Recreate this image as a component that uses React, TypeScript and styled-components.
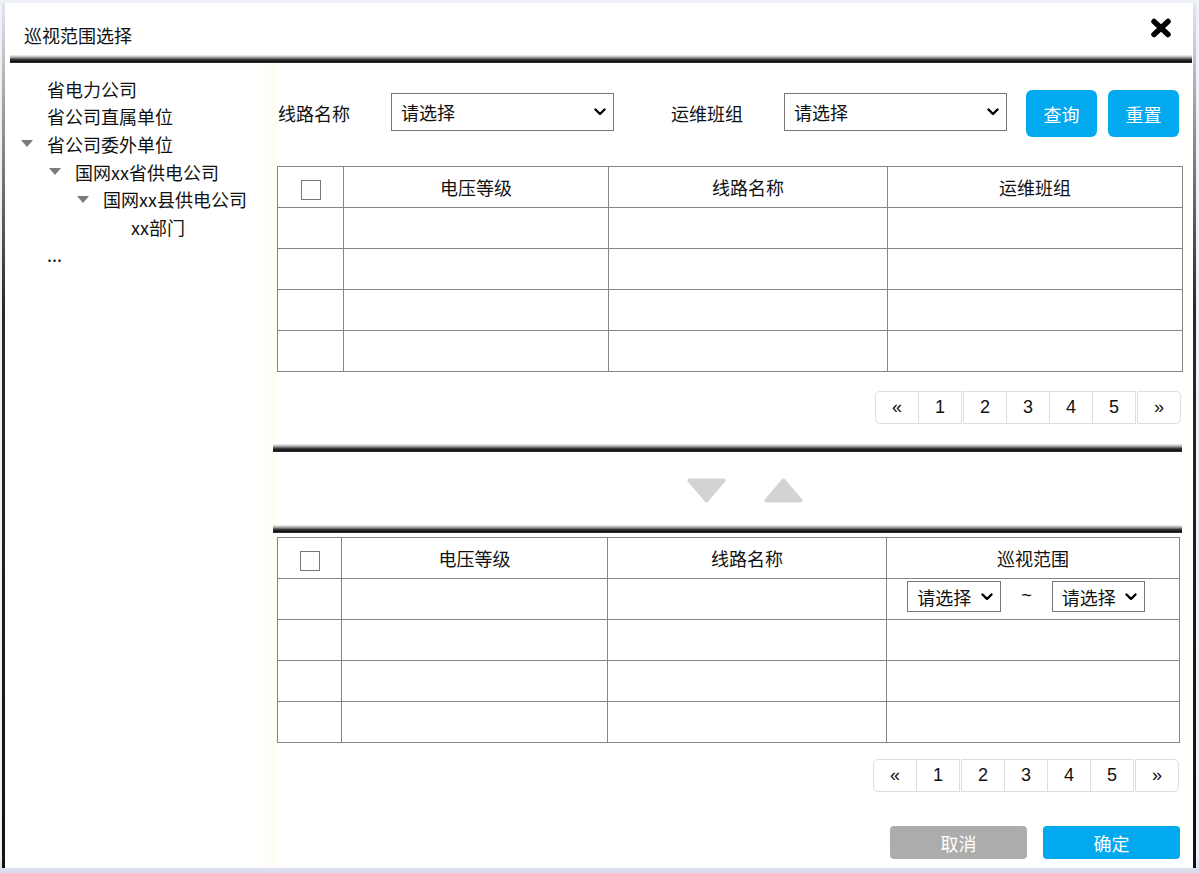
import React from "react";
import styled, { createGlobalStyle } from "styled-components";

const GlobalStyle = createGlobalStyle`
  html, body {
    margin: 0;
    padding: 0;
  }
  body {
    min-height: 100vh;
    background: linear-gradient(to bottom, #eef2f8 0%, #eef2f8 98%, #d8daee 100%);
    font-family: "Noto Sans CJK SC", "Noto Sans", sans-serif;
    color: #111;
  }
`;

const Dialog = styled.div`
  box-sizing: border-box;
  margin: 3px 0 0 2px;
  width: 1194px;
  height: 865px;
  background: #fff;
  border-style: solid;
  border-width: 0 3px;
  border-image: linear-gradient(to bottom, #e4e8ee 0%, #a0a0a0 12%, #2a2a2a 35%, #111 100%) 1;
  display: flex;
  flex-direction: column;
`;

const Header = styled.div`
  box-sizing: border-box;
  height: 52px;
  padding: 12px 21px 0 19px;
  display: flex;
  justify-content: space-between;
  align-items: center;
`;

const Title = styled.h1`
  margin: 0;
  font-size: 18px;
  font-weight: 400;
  line-height: 24px;
`;

const CloseButton = styled.button`
  align-self: flex-start;
  margin-top: 3px;
  padding: 0;
  border: none;
  background: none;
  width: 22px;
  height: 20px;
  display: flex;
`;

const Rule = styled.div<{ $left: number; $right: number; $top?: number }>`
  height: 8px;
  margin: ${(p) => p.$top ?? 0}px ${(p) => p.$right}px 0 ${(p) => p.$left}px;
  background: linear-gradient(to bottom, #f3f3f3 0%, #b8b8b8 25%, #3c3c3c 55%, #101010 80%, #3a3a3a 100%);
`;

const Body = styled.div`
  display: flex;
  flex: 1;
  min-height: 0;
`;

const Tree = styled.ul`
  list-style: none;
  margin: 0;
  padding: 12px 0 0;
  width: 272px;
  flex-shrink: 0;
  background: linear-gradient(to right, #fff 94%, #fffdf3 100%);
`;

const TreeItem = styled.li<{ $level: number }>`
  display: flex;
  align-items: center;
  height: 27.6px;
  padding-left: ${(p) => 16 + p.$level * 28}px;
  font-size: 18px;
  white-space: nowrap;
`;

const CaretSlot = styled.span`
  width: 26px;
  flex-shrink: 0;
  display: flex;
  align-items: center;
`;

const Main = styled.div`
  width: 905px;
  padding-top: 27px;
  display: flex;
  flex-direction: column;
`;

const FilterRow = styled.div`
  display: flex;
  align-items: center;
  height: 47px;
`;

const Label = styled.span<{ $offset: number }>`
  width: 113px;
  margin-left: ${(p) => p.$offset}px;
  margin-top: -2px;
  font-size: 18px;
`;

const Select = styled.div<{ $w: number; $h: number; $lift?: number }>`
  box-sizing: border-box;
  width: ${(p) => p.$w}px;
  height: ${(p) => p.$h}px;
  margin-top: ${(p) => -(p.$lift ?? 0)}px;
  border: 1px solid #767676;
  background: #fff;
  display: flex;
  align-items: center;
  justify-content: space-between;
  padding: 0 7px 0 9px;
  font-size: 18px;
  flex-shrink: 0;
`;

const ActionButton = styled.button<{ $offset: number }>`
  width: 71px;
  height: 47px;
  margin-left: ${(p) => p.$offset}px;
  padding: 0;
  border: none;
  border-radius: 6px;
  background: #03a9ef;
  color: #fff;
  font: 18px "Noto Sans CJK SC", sans-serif;
`;

const Grid = styled.table<{ $w: number; $top: number }>`
  width: ${(p) => p.$w}px;
  margin-top: ${(p) => p.$top}px;
  border-collapse: collapse;
  table-layout: fixed;
`;

const Th = styled.th`
  height: 40px;
  padding: 0;
  border: 1px solid #858585;
  font-size: 18px;
  font-weight: 400;
  text-align: center;
  line-height: 24px;
`;

const Td = styled.td`
  height: 40px;
  padding: 0;
  border: 1px solid #858585;
  text-align: center;
  line-height: 24px;
  vertical-align: middle;
`;

const CheckBox = styled.span`
  display: inline-block;
  box-sizing: border-box;
  width: 20px;
  height: 20px;
  border: 1px solid #777;
  background: #fff;
  vertical-align: middle;
`;

const RangeCell = styled.div`
  display: flex;
  align-items: flex-start;
  justify-content: center;
  gap: 20px;
  padding: 2px 14px 0 0;
  height: 40px;
  box-sizing: border-box;
`;

const Tilde = styled.span`
  font: 18px "Liberation Sans", sans-serif;
  line-height: 28px;
`;

const Pager = styled.ul<{ $top: number; $right: number }>`
  list-style: none;
  margin: ${(p) => p.$top}px ${(p) => p.$right}px 0 0;
  padding: 0;
  display: flex;
  align-self: flex-end;
`;

const PageCell = styled.li<{ $gap?: boolean; $first?: boolean; $last?: boolean }>`
  box-sizing: border-box;
  width: 44px;
  height: 33px;
  margin-left: ${(p) => (p.$first ? 0 : p.$gap ? 1 : -1)}px;
  border: 1px solid #dedede;
  border-radius: ${(p) => (p.$first ? "5px 0 0 5px" : p.$last ? "0 5px 5px 0" : "0")};
  display: flex;
  align-items: center;
  justify-content: center;
  font: 18px "Liberation Sans", Arial, sans-serif;
  color: #111;
`;

const Arrows = styled.div`
  margin-top: 26px;
  height: 25px;
  display: flex;
  justify-content: center;
  gap: 38px;
  padding-left: 31px;
`;

const Footer = styled.div`
  display: flex;
  justify-content: flex-end;
  gap: 16px;
  margin: 34px 2px 0 0;
`;

const FooterButton = styled.button<{ $primary?: boolean }>`
  width: 137px;
  height: 33px;
  padding: 0;
  border: none;
  border-radius: 4px;
  background: ${(p) => (p.$primary ? "#03a9ef" : "#acacac")};
  color: #fff;
  font: 18px "Noto Sans CJK SC", sans-serif;
`;

const Chevron = () => (
  <svg width="12" height="8" viewBox="0 0 12 8">
    <path d="M1.5 1.5 L6 6 L10.5 1.5" fill="none" stroke="#000" strokeWidth="2.4" strokeLinecap="round" strokeLinejoin="round" />
  </svg>
);

const Caret = () => (
  <svg width="12" height="7" viewBox="0 0 12 7">
    <polygon points="0,0 12,0 6,7" fill="#7a7a7a" />
  </svg>
);

const Triangle = ({ up }: { up?: boolean }) => (
  <svg width="39" height="25" viewBox="0 0 39 25">
    <polygon
      points={up ? "19.5,2.5 36.5,22.5 2.5,22.5" : "2.5,2.5 36.5,2.5 19.5,22.5"}
      fill="#d3d3d3"
      stroke="#d3d3d3"
      strokeWidth="4"
      strokeLinejoin="round"
    />
  </svg>
);

const tree = [
  { level: 0, text: "省电力公司" },
  { level: 0, text: "省公司直属单位" },
  { level: 0, text: "省公司委外单位", open: true },
  { level: 1, text: "国网xx省供电公司", open: true },
  { level: 2, text: "国网xx县供电公司", open: true },
  { level: 3, text: "xx部门" },
  { level: 0, text: "..." },
];

const Pagination = ({ top, right }: { top: number; right: number }) => (
  <Pager $top={top} $right={right}>
    <PageCell $first>«</PageCell>
    <PageCell>1</PageCell>
    <PageCell $gap>2</PageCell>
    <PageCell>3</PageCell>
    <PageCell>4</PageCell>
    <PageCell>5</PageCell>
    <PageCell $gap $last>»</PageCell>
  </Pager>
);

const EmptyRows = ({ count }: { count: number }) => (
  <>
    {Array.from({ length: count }).map((_, i) => (
      <tr key={i}>
        <Td />
        <Td />
        <Td />
        <Td />
      </tr>
    ))}
  </>
);

export default function App() {
  return (
    <>
      <GlobalStyle />
      <Dialog>
        <Header>
          <Title>巡视范围选择</Title>
          <CloseButton aria-label="关闭">
            <svg width="22" height="20" viewBox="0 0 22 20">
              <path d="M4 3.5 L18 16.5 M18 3.5 L4 16.5" stroke="#000" strokeWidth="5.5" strokeLinecap="round" />
            </svg>
          </CloseButton>
        </Header>
        <Rule $left={5} $right={1} />
        <Body>
          <Tree>
            {tree.map((node, i) => (
              <TreeItem key={i} $level={node.level}>
                <CaretSlot>{node.open && <Caret />}</CaretSlot>
                {node.text}
              </TreeItem>
            ))}
          </Tree>
          <Main>
            <FilterRow>
              <Label $offset={1}>线路名称</Label>
              <Select $w={223} $h={38} $lift={3}>
                请选择
                <Chevron />
              </Select>
              <Label $offset={57}>运维班组</Label>
              <Select $w={223} $h={38} $lift={3}>
                请选择
                <Chevron />
              </Select>
              <ActionButton $offset={19}>查询</ActionButton>
              <ActionButton $offset={11}>重置</ActionButton>
            </FilterRow>

            <Grid $w={905} $top={29}>
              <colgroup>
                <col style={{ width: 66 }} />
                <col style={{ width: 265 }} />
                <col style={{ width: 279 }} />
                <col style={{ width: 295 }} />
              </colgroup>
              <thead>
                <tr>
                  <Th>
                    <CheckBox />
                  </Th>
                  <Th>电压等级</Th>
                  <Th>线路名称</Th>
                  <Th>运维班组</Th>
                </tr>
              </thead>
              <tbody>
                <EmptyRows count={4} />
              </tbody>
            </Grid>
            <Pagination top={19} right={1} />

            <Rule $left={-4} $right={0} $top={20} />
            <Arrows>
              <Triangle />
              <Triangle up />
            </Arrows>
            <Rule $left={-4} $right={0} $top={22} />

            <Grid $w={902} $top={4}>
              <colgroup>
                <col style={{ width: 64 }} />
                <col style={{ width: 266 }} />
                <col style={{ width: 279 }} />
                <col style={{ width: 293 }} />
              </colgroup>
              <thead>
                <tr>
                  <Th>
                    <CheckBox />
                  </Th>
                  <Th>电压等级</Th>
                  <Th>线路名称</Th>
                  <Th>巡视范围</Th>
                </tr>
              </thead>
              <tbody>
                <tr>
                  <Td />
                  <Td />
                  <Td />
                  <Td>
                    <RangeCell>
                      <Select $w={94} $h={31}>
                        请选择
                        <Chevron />
                      </Select>
                      <Tilde>~</Tilde>
                      <Select $w={93} $h={31}>
                        请选择
                        <Chevron />
                      </Select>
                    </RangeCell>
                  </Td>
                </tr>
                <EmptyRows count={3} />
              </tbody>
            </Grid>
            <Pagination top={16} right={3} />

            <Footer>
              <FooterButton>取消</FooterButton>
              <FooterButton $primary>确定</FooterButton>
            </Footer>
          </Main>
        </Body>
      </Dialog>
    </>
  );
}
